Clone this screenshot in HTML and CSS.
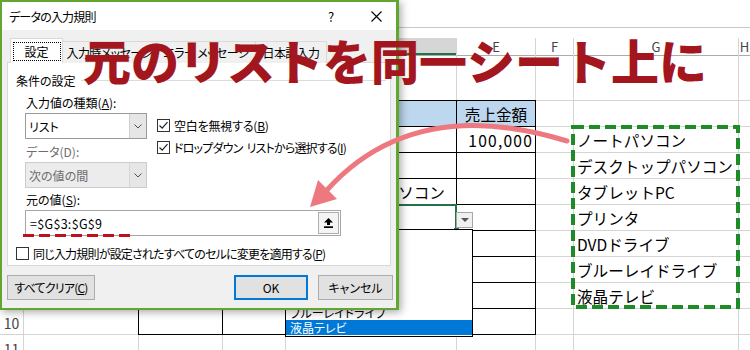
FILE: index.html
```html
<!DOCTYPE html>
<html lang="ja">
<head>
<meta charset="utf-8">
<title>データの入力規則</title>
<link rel="stylesheet" href="styles.css">
</head>
<body>
<div class="app">
  <div class="formula-bar"></div>
  <div class="sheet">
    <div class="colhdr"></div><div class="colhdr">A</div><div class="colhdr">B</div><div class="colhdr">C</div><div class="colhdr sel">D</div><div class="colhdr">E</div><div class="colhdr">F</div><div class="colhdr">G</div><div class="colhdr">H</div>

    <div class="rowhdr">1</div><div></div><div></div><div></div><div></div><div></div><div></div><div></div><div></div>

    <div class="table">
      <div class="hdr"></div><div class="hdr"></div><div class="hdr"></div><div class="hdr center">売上金額</div>
      <div></div><div></div><div></div><div class="num">100,000</div>
      <div></div><div></div><div></div><div></div>
      <div></div><div></div><div class="txt">デスクトップパソコン</div><div></div>
      <div></div><div></div><div class="active"><span class="dd-btn"></span><span class="fill"></span></div><div></div>
      <div></div><div></div><div></div><div></div>
      <div></div><div></div><div></div><div></div>
      <div></div><div></div><div></div><div></div>
      <div></div><div></div><div></div><div></div>
    </div>

    <div class="rowhdr">2</div><div></div><div></div><div></div><div></div>
    <div class="rowhdr">3</div><div></div><div></div><div class="txt">ノートパソコン</div><div></div>
    <div class="rowhdr">4</div><div></div><div></div><div class="txt">デスクトップパソコン</div><div></div>
    <div class="rowhdr">5</div><div></div><div></div><div class="txt">タブレットPC</div><div></div>
    <div class="rowhdr">6</div><div></div><div></div><div class="txt">プリンタ</div><div></div>
    <div class="rowhdr">7</div><div></div><div></div><div class="txt">DVDドライブ</div><div></div>
    <div class="rowhdr">8</div><div></div><div></div><div class="txt">ブルーレイドライブ</div><div></div>
    <div class="rowhdr">9</div><div></div><div></div><div class="txt">液晶テレビ</div><div></div>
    <div class="rowhdr">10</div><div></div><div></div><div></div><div></div>
    <div class="rowhdr">11</div><div></div><div></div><div></div><div></div><div></div><div></div><div></div><div></div>
  </div>

  <div class="dropdown">
    <div class="dd-item">ノートパソコン</div>
    <div class="dd-item">デスクトップパソコン</div>
    <div class="dd-item">タブレットPC</div>
    <div class="dd-item">プリンタ</div>
    <div class="dd-item">DVDドライブ</div>
    <div class="dd-item">ブルーレイドライブ</div>
    <div class="dd-item selected">液晶テレビ</div>
  </div>

  <div class="dialog">
    <div class="titlebar">
      <span class="title">データの入力規則</span>
      <span class="help">?</span>
      <span class="close"><svg width="11" height="11" viewBox="0 0 11 11"><path d="M0.5 0.5 L10.5 10.5 M10.5 0.5 L0.5 10.5" stroke="#000" stroke-width="1.1" fill="none"/></svg></span>
    </div>
    <div class="dlg-body">
      <div class="tabs">
        <div class="tab active"><span class="focus">設定</span></div>
        <div class="tab t2">入力時メッセージ</div>
        <div class="tab t3">エラー メッセージ</div>
        <div class="tab t4">日本語入力</div>
      </div>
      <div class="panel">
        <div class="group"><span>条件の設定</span><span class="group-line"></span></div>
        <div class="upper">
          <div class="left">
            <div class="lbl">入力値の種類(<u>A</u>):</div>
            <div class="combo">
              <span class="val">リスト</span>
              <span class="arr"><svg width="8" height="5" viewBox="0 0 8 5"><polyline points="0.5,0.5 4,4 7.5,0.5" fill="none" stroke="#505050" stroke-width="1"/></svg></span>
            </div>
            <div class="lbl dim gap5">データ(D):</div>
            <div class="combo disabled">
              <span class="val">次の値の間</span>
              <span class="arr"><svg width="8" height="5" viewBox="0 0 8 5"><polyline points="0.5,0.5 4,4 7.5,0.5" fill="none" stroke="#505050" stroke-width="1"/></svg></span>
            </div>
          </div>
          <div class="right">
            <div class="chk"><span class="box"><svg width="11" height="11" viewBox="0 0 11 11"><polyline points="1.5,5.5 4.2,8.2 9.5,2.2" fill="none" stroke="#222" stroke-width="1.2"/></svg></span><span class="semi">空白を無視する(<u>B</u>)</span></div>
            <div class="chk"><span class="box"><svg width="11" height="11" viewBox="0 0 11 11"><polyline points="1.5,5.5 4.2,8.2 9.5,2.2" fill="none" stroke="#222" stroke-width="1.2"/></svg></span><span class="tight">ドロップダウン<span class="sp"> </span>リストから選択する(<u>I</u>)</span></div>
          </div>
        </div>
        <div class="lbl src">元の値(<u>S</u>):</div>
        <div class="input">
          <span class="val">=$G$3:$G$9</span>
          <span class="collapse"><svg width="9" height="10" viewBox="0 0 9 10"><path d="M4.5 0 L9 4.5 L6 4.5 L6 7 L3 7 L3 4.5 L0 4.5 Z" fill="#000"/><rect x="0" y="8.3" width="9" height="1.7" fill="#000"/></svg></span>
          <svg class="redline" width="112" height="3" viewBox="0 0 112 3"><line x1="0" y1="1.5" x2="112" y2="1.5" stroke="#c0101c" stroke-width="3" stroke-dasharray="11 5"/></svg>
        </div>
        <div class="chk apply"><span class="box"></span><span class="tight">同じ入力規則が設定されたすべてのセルに変更を適用する(<u>P</u>)</span></div>
      </div>
      <div class="buttons">
        <div class="btn clear"><span class="tight">すべてクリア(<u>C</u>)</span></div>
        <div class="spacer"></div>
        <div class="btn ok">OK</div>
        <div class="btn cancel">キャンセル</div>
      </div>
    </div>
  </div>

  <svg class="listbox" width="174" height="188" viewBox="0 0 174 188"><rect x="4" y="4" width="165" height="180" fill="none" stroke="#1f8b24" stroke-width="4" stroke-dasharray="11 5"/></svg>

  <svg class="arrow" width="750" height="350" viewBox="0 0 750 350">
    <path d="M567 141 Q414 94 327 190" fill="none" stroke="#ee7880" stroke-width="5" stroke-linecap="round"/>
    <polygon points="310,207 337,199 318,180" fill="#ee7880"/>
  </svg>

  <div class="headline">元のリストを同一シート上に</div>
</div>
</body>
</html>
```

FILE: styles.css
```css
* { box-sizing: border-box; }
html, body { margin: 0; padding: 0; }
body {
  width: 750px;
  height: 350px;
  overflow: hidden;
  background: #fff;
  font-family: "Noto Sans CJK JP", "Noto Sans", sans-serif;
  color: #000;
}
.app { position: relative; width: 750px; height: 350px; overflow: hidden; }

.formula-bar { height: 28px; border-bottom: 1px solid #c8c8c8; margin-bottom: 10px; }

.sheet {
  display: grid;
  grid-template-columns: 23px 114px 83px 62px 170px 78px 37px 164px 1fr;
  grid-template-rows: 17px 44px repeat(10, 25px);
  gap: 1px;
  background: #d4d4d4;
}
.sheet > div { background: #fff; }
.sheet > .colhdr {
  font-size: 13px;
  color: #444;
  display: flex;
  align-items: center;
  justify-content: center;
  box-shadow: 0 1px 0 #ababab;
}
.sheet > .colhdr.sel { background: #d6d6d6; border-bottom: 2px solid #217346; }
.sheet > .rowhdr {
  font-size: 14px;
  color: #444;
  display: flex;
  align-items: center;
  justify-content: center;
  padding-top: 3px;
}
.txt, .num, .center {
  font-size: 15.6px;
  display: flex;
  align-items: center;
  white-space: nowrap;
}
.txt { padding-left: 3px; }
.num { justify-content: flex-end; padding-right: 2px; letter-spacing: 1.2px; }
.center { justify-content: center; }

.sheet > .table {
  grid-column: 3 / 7;
  grid-row: 3 / 12;
  display: grid;
  grid-template-columns: 83px 62px 170px 78px;
  grid-template-rows: repeat(9, 25px);
  gap: 1px;
  background: #000;
  outline: 1px solid #000;
}
.table > div { background: #fff; }
.table > .hdr { background: #bdd7ee; }
.table > .active {
  position: relative;
  outline: 2px solid #217346;
  outline-offset: -1px;
}
.dd-btn {
  position: absolute;
  left: 170px;
  top: 7px;
  width: 17px;
  height: 16px;
  border: 1px solid #a6a6a6;
  background: #f0f0f0;
  display: flex;
  align-items: center;
  justify-content: center;
}
.dd-btn::after {
  content: "";
  border-left: 4px solid transparent;
  border-right: 4px solid transparent;
  border-top: 4px solid #555;
}
.fill {
  position: absolute;
  right: -3px;
  bottom: -3px;
  width: 5px;
  height: 5px;
  background: #217346;
}

.dropdown {
  position: absolute;
  z-index: 1;
  left: 285px;
  top: 229px;
  width: 188px;
  height: 108px;
  border: 1px solid #000;
  background: #fff;
  font-size: 12px;
  font-feature-settings: "palt";
}
.dd-item { height: 15px; line-height: 15px; padding-left: 4px; white-space: nowrap; }
.dd-item.selected { background: #0078d7; color: #fff; }

.dialog {
  position: absolute;
  z-index: 2;
  left: 0;
  top: 0;
  width: 399px;
  height: 310px;
  border: 2px solid #62a530;
  border-right-width: 3px;
  background: #f0f0f0;
  box-shadow: 2px 2px 8px rgba(0, 0, 0, 0.35);
  font-size: 12px;
  font-feature-settings: "palt";
  display: flex;
  flex-direction: column;
}
.tight { letter-spacing: -0.8px; }
.semi { letter-spacing: -0.2px; }
.sp { display: inline-block; width: 4px; }
.titlebar {
  height: 28px;
  background: #fff;
  display: flex;
  align-items: center;
  padding-left: 7px;
}
.title { flex: 1; letter-spacing: -0.8px; }
.help { width: 50px; text-align: center; font-size: 13px; }
.close { width: 40px; display: flex; justify-content: center; }

.dlg-body { flex: 1; padding: 8px 0 0 5px; }
.tabs {
  display: flex;
  align-items: flex-end;
  height: 25px;
  margin-left: 3px;
  margin-bottom: -1px;
  position: relative;
  z-index: 1;
}
.tab {
  height: 22px;
  border: 1px solid #d9d9d9;
  border-bottom: none;
  background: #f0f0f0;
  display: flex;
  align-items: center;
  justify-content: center;
  white-space: nowrap;
  overflow: hidden;
  letter-spacing: -0.6px;
}
.tab.active { width: 53px; height: 25px; background: #fff; align-items: flex-start; padding-top: 3px; letter-spacing: 0; }
.focus {
  width: 48px;
  height: 19px;
  border: 1px dotted #000;
  display: flex;
  align-items: center;
  justify-content: center;
}
.tab.t2 { width: 95px; margin-left: -1px; }
.tab.t3 { width: 100px; margin-left: -1px; }
.tab.t4 { width: 72px; margin-left: -1px; }

.panel {
  width: 384px;
  height: 204px;
  background: #fff;
  border: 1px solid #d9d9d9;
  display: flex;
  flex-direction: column;
}
.group { display: flex; align-items: center; height: 16px; margin: 9px 4px 0 8px; }
.group-line { flex: 1; height: 1px; background: #dcdcdc; margin-left: 5px; }

.upper { display: flex; margin: 7px 0 0 17px; }
.left { width: 122px; display: flex; flex-direction: column; }
.lbl { height: 16px; line-height: 16px; padding-left: 1px; white-space: nowrap; }
.lbl.dim { color: #6d6d6d; }
.gap5 { margin-top: 5px; }
.combo {
  height: 26px;
  margin-top: 2px;
  border: 1px solid #9b9b9b;
  display: flex;
  background: #fff;
}
.combo .val { flex: 1; padding-left: 3px; display: flex; align-items: center; }
.combo .arr {
  width: 17px;
  background: #e6e6e6;
  border-left: 1px solid #cfcfcf;
  display: flex;
  align-items: center;
  justify-content: center;
}
.combo.disabled { background: #ececec; border-color: #cccccc; color: #6d6d6d; }
.combo.disabled .arr { background: #e6e6e6; border-left-color: #d6d6d6; }

.right { margin-left: 10px; padding-top: 22px; display: flex; flex-direction: column; gap: 6px; }
.chk { display: flex; align-items: center; height: 16px; gap: 4px; white-space: nowrap; }
.box {
  width: 13px;
  height: 13px;
  border: 1px solid #333;
  background: #fff;
  display: flex;
  align-items: center;
  justify-content: center;
}

.lbl.src { margin: 4px 0 0 17px; }
.input {
  position: relative;
  margin: 2px 0 0 17px;
  width: 316px;
  height: 26px;
  border: 1px solid #a6a6a6;
  background: #fff;
  display: flex;
  align-items: center;
}
.input .val { flex: 1; padding-left: 4px; font-size: 12.5px; letter-spacing: 0.3px; }
.collapse {
  width: 21px;
  height: 22px;
  margin-right: 1px;
  border: 1px solid #adadad;
  background: #f4f4f4;
  display: flex;
  align-items: center;
  justify-content: center;
}
.redline { position: absolute; left: -3px; top: 23px; }

.chk.apply { margin: 9px 0 0 8px; }

.buttons { display: flex; height: 25px; margin: 9px 3px 0 0; }
.btn {
  height: 25px;
  border: 1px solid #adadad;
  background: #e1e1e1;
  display: flex;
  align-items: center;
  justify-content: center;
  white-space: nowrap;
}
.btn.clear { width: 88px; }
.spacer { flex: 1; }
.btn.ok { width: 74px; border: 2px solid #0078d7; }
.btn.cancel { width: 75px; margin-left: 10px; }

.listbox { position: absolute; z-index: 3; left: 569px; top: 123px; }
.arrow { position: absolute; z-index: 3; left: 0; top: 0; }

.headline {
  position: absolute;
  z-index: 4;
  left: 83px;
  top: 35px;
  font-size: 48px;
  line-height: 48px;
  font-weight: 900;
  color: #a3161e;
  white-space: nowrap;
}
```
